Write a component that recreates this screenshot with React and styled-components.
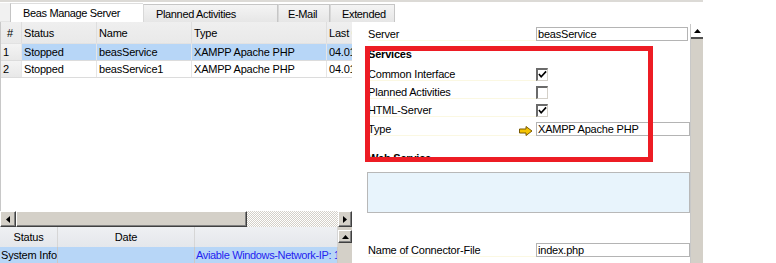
import React from "react";
import styled, { createGlobalStyle, css } from "styled-components";

const Global = createGlobalStyle`
  html, body { margin: 0; padding: 0; background: #fff; }
  body { font-family: "Liberation Sans", Arial, sans-serif; font-size: 11px; color: #000; }
  * { box-sizing: border-box; }
`;

const Page = styled.div`
  width: 703px;
  height: 263px;
  display: flex;
  flex-direction: column;
  border-top: 2px solid #dcdad6;
  overflow: hidden;
`;

const Body = styled.div`
  display: flex;
  flex: 1;
  min-height: 0;
`;

const LeftPane = styled.div`
  width: 352px;
  flex: none;
  display: flex;
  flex-direction: column;
  position: relative;
  z-index: 1;
`;

const TabBar = styled.div`
  height: 20px;
  display: flex;
  align-items: flex-end;
`;

const TabLead = styled.div`
  width: 10px;
  flex: none;
  height: 19px;
  background: #f1f1f1;
  border-bottom: 1px solid #e4e4e4;
`;

const Tab = styled.div`
  flex: none;
  width: ${(p) => p.$w}px;
  padding-left: ${(p) => p.$pad ?? 12}px;
  display: flex;
  align-items: center;
  white-space: nowrap;
  letter-spacing: -0.35px;
  ${(p) =>
    p.$active
      ? css`
          height: 19px;
          background: #fff;
          border-left: 1px solid #c4c4c4;
          border-top: 1px solid #dedede;
        `
      : css`
          height: 18px;
          background: linear-gradient(#f4f4f4, #e6e6e6);
          border: 1px solid #c6c6c6;
          border-bottom: none;
          border-left-color: #d8d8d8;
        `}
`;

const Grid = styled.div`
  height: 189px;
  border-left: 1px solid #c8c8c8;
  display: flex;
  flex-direction: column;
  overflow: hidden;
`;

const GridRow = styled.div`
  display: grid;
  grid-template-columns: 21px 75px 95px 135px 1fr;
  height: ${(p) => (p.$head ? 22 : 17)}px;
  background: ${(p) => (p.$head ? "linear-gradient(#efefef, #e9e9e9)" : p.$sel ? "#b7d6f7" : "#fff")};
  border-bottom: 1px solid ${(p) => (p.$head ? "#e2e2e2" : "#dcdcdc")};
`;

const Cell = styled.div`
  display: flex;
  align-items: center;
  padding-left: ${(p) => p.$pad ?? 2}px;
  white-space: nowrap;
  overflow: hidden;
  letter-spacing: -0.2px;
  border-right: ${(p) => (p.$last ? "none" : `1px solid ${p.$head ? "#dedede" : "#e6e6e6"}`)};
  ${(p) =>
    p.$num &&
    css`
      background: linear-gradient(#f4f4f4, #e8e8e8);
      padding-left: 2px;
    `}
`;

const HScroll = styled.div`
  height: 16px;
  display: flex;
  background: #d4d0c8;
`;

const ScrollBtn = styled.div`
  width: ${(p) => p.$w ?? 16}px;
  height: ${(p) => p.$h ?? 16}px;
  flex: none;
  background: #d4d0c8;
  border: 1px solid;
  border-color: #fff #404040 #404040 #fff;
  box-shadow: inset -1px -1px 0 #808080;
  display: flex;
  align-items: center;
  justify-content: center;
`;

const Thumb = styled.div`
  width: 231px;
  height: 16px;
  background: #d4d0c8;
  border: 1px solid;
  border-color: #fff #404040 #404040 #fff;
  box-shadow: inset -1px -1px 0 #808080;
`;

const Track = styled.div`
  flex: 1;
  background-color: #fff;
  background-image: repeating-conic-gradient(#d4d0c8 0 25%, #fff 0 50%);
  background-size: 2px 2px;
`;

const Bottom = styled.div`
  height: 36px;
  display: flex;
`;

const BottomTable = styled.div`
  flex: 1;
  display: flex;
  flex-direction: column;
  overflow: hidden;
`;

const BottomRow = styled.div`
  display: grid;
  grid-template-columns: 58px 137px 1fr;
  height: ${(p) => (p.$head ? 20 : 16)}px;
  background: ${(p) => (p.$head ? "linear-gradient(#eef0f3, #e4e7eb)" : "#b7d6f7")};
`;

const BCell = styled.div`
  display: flex;
  align-items: center;
  justify-content: ${(p) => (p.$center ? "center" : "flex-start")};
  padding-left: ${(p) => (p.$center ? 0 : 1)}px;
  white-space: nowrap;
  overflow: hidden;
  letter-spacing: ${(p) => (p.$link ? "-0.35px" : "-0.2px")};
  color: ${(p) => (p.$link ? "#2424f0" : "#000")};
  border-right: 1px solid ${(p) => (p.$head ? "#d6d6d6" : "#c8c8c8")};
`;

const VScrollSmall = styled.div`
  width: 14px;
  background: #d4d0c8;
  padding-top: 3px;
  display: flex;
  flex-direction: column;
`;

const RightPane = styled.div`
  flex: 1;
  display: flex;
`;

const Content = styled.div`
  position: relative;
  width: 338px;
  padding: 25px 0 0 16px;
  display: flex;
  flex-direction: column;
`;

const FieldRow = styled.div`
  display: flex;
  align-items: center;
  height: 14px;
  margin-top: ${(p) => p.$mt ?? 0}px;
`;

const Label = styled.div`
  width: 168px;
  height: 14px;
  display: flex;
  align-items: center;
  white-space: nowrap;
  letter-spacing: -0.2px;
  font-weight: ${(p) => (p.$bold ? 700 : 400)};
  border-bottom: ${(p) => (p.$bold ? "none" : "1px solid #fbf8e2")};
  position: relative;
`;

const Input = styled.div`
  width: ${(p) => p.$w}px;
  height: 14px;
  border: 1px solid #b4b4b4;
  background: #fff;
  padding-left: 1px;
  display: flex;
  align-items: center;
  white-space: nowrap;
  letter-spacing: -0.2px;
`;

const Check = styled.div`
  width: 12px;
  height: 13px;
  background: #fff;
  border-top: 2px solid #6a6a6a;
  border-left: 2px solid #6a6a6a;
  border-right: 1px solid #d4d0c8;
  border-bottom: 1px solid #d4d0c8;
  display: flex;
  align-items: center;
  justify-content: center;
`;

const ArrowIcon = styled.svg`
  position: absolute;
  right: 3px;
  top: 4px;
`;

const InfoBox = styled.div`
  width: 323px;
  height: 41px;
  margin-top: 7px;
  background: #e8f4fc;
  border: 1px solid #b8b8b8;
  margin-left: -1px;
`;

const Highlight = styled.div`
  position: absolute;
  left: 13px;
  top: 44px;
  width: 288px;
  height: 116px;
  border: 5px solid #ed1c24;
  pointer-events: none;
`;

const VScroll = styled.div`
  width: 13px;
  margin-top: 22px;
  background: #d4d0c8;
  display: flex;
  flex-direction: column;
  border-left: 1px solid #c8c8c8;
`;

const VBtn = styled.div`
  height: 15px;
  background: #fff;
  border-bottom: 2px solid #505050;
  display: flex;
  align-items: center;
  justify-content: center;
`;

const Tri = ({ dir }) => {
  const pts = {
    up: "0,4 7,4 3.5,0",
    left: "4,0 4,7 0,3.5",
    right: "0,0 0,7 4,3.5",
  }[dir];
  const w = dir === "up" ? 7 : 4;
  const h = dir === "up" ? 4 : 7;
  return (
    <svg width={w} height={h} viewBox={`0 0 ${w} ${h}`}>
      <polygon points={pts} fill="#000" />
    </svg>
  );
};

const Tick = () => (
  <svg width="10" height="9" viewBox="0 0 10 9">
    <path d="M1 4 L3.5 7 L9 1" stroke="#000" strokeWidth="1.8" fill="none" />
  </svg>
);

const rows = [
  { n: "1", status: "Stopped", name: "beasService", type: "XAMPP Apache PHP", last: "04.01", sel: true },
  { n: "2", status: "Stopped", name: "beasService1", type: "XAMPP Apache PHP", last: "04.01" },
];

export default function App() {
  return (
    <>
      <Global />
      <Page>
        <Body>
          <LeftPane>
            <TabBar>
              <TabLead />
              <Tab $active $w={133}>Beas Manage Server</Tab>
              <Tab $w={135}>Planned Activities</Tab>
              <Tab $w={52} $pad={9}>E-Mail</Tab>
              <Tab $w={65} $pad={11}>Extended</Tab>
            </TabBar>
            <Grid>
              <GridRow $head>
                <Cell $head $pad={6}>#</Cell>
                <Cell $head>Status</Cell>
                <Cell $head>Name</Cell>
                <Cell $head>Type</Cell>
                <Cell $head $last>Last Changed</Cell>
              </GridRow>
              {rows.map((r) => (
                <GridRow key={r.n} $sel={r.sel}>
                  <Cell $num>{r.n}</Cell>
                  <Cell>{r.status}</Cell>
                  <Cell>{r.name}</Cell>
                  <Cell>{r.type}</Cell>
                  <Cell $last>{r.last}</Cell>
                </GridRow>
              ))}
            </Grid>
            <HScroll>
              <ScrollBtn><Tri dir="left" /></ScrollBtn>
              <Thumb />
              <Track />
              <ScrollBtn $w={14}><Tri dir="right" /></ScrollBtn>
            </HScroll>
            <Bottom>
              <BottomTable>
                <BottomRow $head>
                  <BCell $head $center>Status</BCell>
                  <BCell $head $center>Date</BCell>
                  <BCell $head />
                </BottomRow>
                <BottomRow>
                  <BCell>System Info</BCell>
                  <BCell />
                  <BCell $link>Aviable Windows-Network-IP: 10.0.0.1</BCell>
                </BottomRow>
              </BottomTable>
              <VScrollSmall>
                <ScrollBtn $w={14} $h={13}><Tri dir="up" /></ScrollBtn>
              </VScrollSmall>
            </Bottom>
          </LeftPane>
          <RightPane>
            <Content>
              <FieldRow>
                <Label>Server</Label>
                <Input $w={152}>beasService</Input>
              </FieldRow>
              <FieldRow $mt={6}>
                <Label $bold>Services</Label>
              </FieldRow>
              <FieldRow $mt={6}>
                <Label>Common Interface</Label>
                <Check><Tick /></Check>
              </FieldRow>
              <FieldRow $mt={4}>
                <Label>Planned Activities</Label>
                <Check />
              </FieldRow>
              <FieldRow $mt={4}>
                <Label>HTML-Server</Label>
                <Check><Tick /></Check>
              </FieldRow>
              <FieldRow $mt={5}>
                <Label>
                  Type
                  <ArrowIcon width="14" height="10" viewBox="0 0 14 10">
                    <polygon
                      points="0.5,3 7,3 7,0.5 13,5 7,9.5 7,7 0.5,7"
                      fill="#f5c400"
                      stroke="#7a5a00"
                      strokeWidth="1"
                    />
                  </ArrowIcon>
                </Label>
                <Input $w={154}>XAMPP Apache PHP</Input>
              </FieldRow>
              <FieldRow $mt={15}>
                <Label $bold>Web Service</Label>
              </FieldRow>
              <InfoBox />
              <FieldRow $mt={30}>
                <Label>Name of Connector-File</Label>
                <Input $w={154}>index.php</Input>
              </FieldRow>
              <Highlight />
            </Content>
            <VScroll>
              <VBtn><Tri dir="up" /></VBtn>
            </VScroll>
          </RightPane>
        </Body>
      </Page>
    </>
  );
}
